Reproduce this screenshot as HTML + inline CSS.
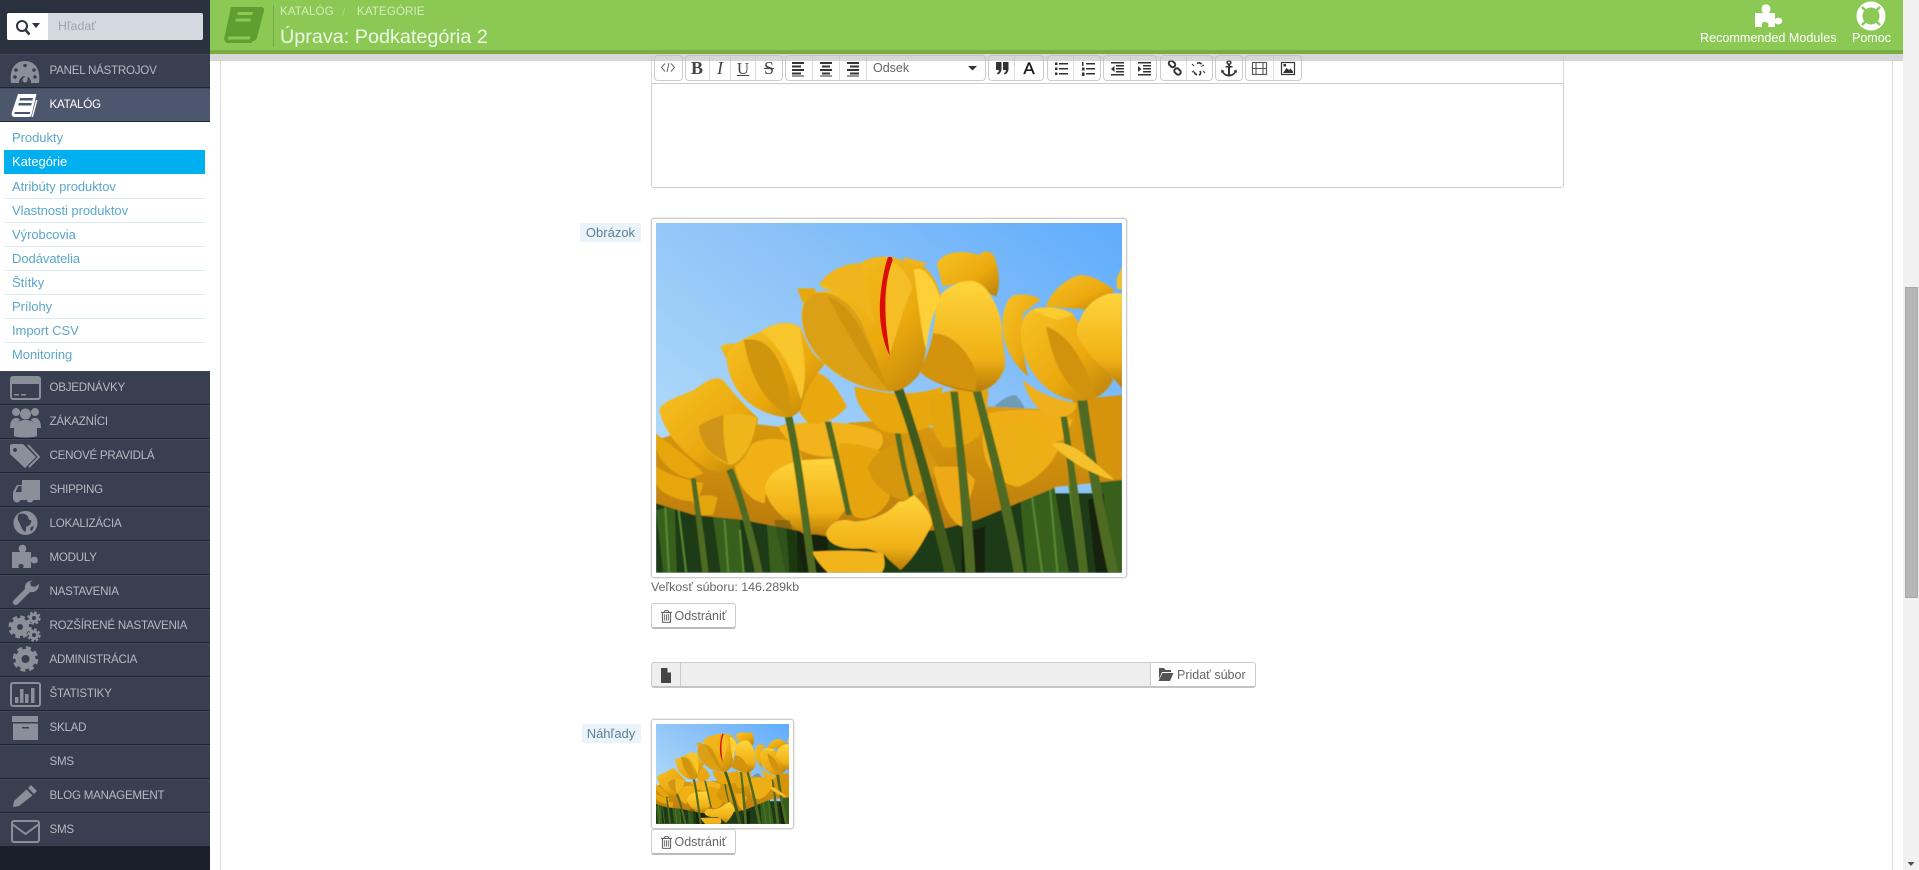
<!DOCTYPE html>
<html lang="sk"><head><meta charset="utf-8"><title>Úprava: Podkategória 2</title>
<style>
html,body{margin:0;padding:0;width:1919px;height:870px;overflow:hidden;background:#fff;font-family:"Liberation Sans",sans-serif}
div,span,a{position:absolute;white-space:nowrap;box-sizing:border-box}
svg{position:absolute;overflow:visible}
.m{left:0;width:210px;height:34px;background:#383f50;border-bottom:1px solid #1e2430;border-top:1px solid #434a5b}
.m span{left:49.5px;top:0;line-height:32px;font-size:11.6px;color:#b5b9c1;letter-spacing:-.25px}
.s{left:12px;font-size:13px;line-height:16px;color:#5aa7c9;letter-spacing:-.05px}
.l{left:4px;width:201px;height:1px;background:#dcebf2}
.g{top:55px;height:26px;border:1px solid #ccc;border-radius:4px;background:#fff}
.d{top:56px;width:1px;height:24px;background:#ddd}
.btn{left:651px;width:84.5px;height:26px;border:1px solid #ccc;border-bottom:2px solid #bbb;border-radius:3px;background:#fff}
.btn span{left:22.5px;top:0;line-height:24px;font-size:12.5px;color:#666}
.lab{background:#e9f3f9;border-radius:2px;color:#5d7f97;font-size:13px;line-height:19px;text-align:center}
.frame{border:1px solid #ccc;border-radius:3px;background:#fff;box-shadow:0 0 0 .5px #ddd}
</style></head><body>

<svg width="0" height="0" style="position:absolute">
<defs>
<linearGradient id="sky" x1="1" y1="0" x2="0" y2="1"><stop offset="0" stop-color="#5facfc"/><stop offset=".4" stop-color="#8cc2f8"/><stop offset=".75" stop-color="#aad6f8"/><stop offset="1" stop-color="#c4e6f6"/></linearGradient>
<linearGradient id="p1" x1="0" y1="0" x2="1" y2="1"><stop offset="0" stop-color="#f7c225"/><stop offset=".6" stop-color="#eba90f"/><stop offset="1" stop-color="#b97f0a"/></linearGradient>
<linearGradient id="p2" x1="0" y1="0" x2="0" y2="1"><stop offset="0" stop-color="#ffd53c"/><stop offset=".7" stop-color="#f0b015"/><stop offset="1" stop-color="#b67c08"/></linearGradient>
<linearGradient id="p3" x1="0" y1="0" x2="0" y2="1"><stop offset="0" stop-color="#e09f10"/><stop offset="1" stop-color="#b97a06"/></linearGradient>
<filter id="soft" x="-5%" y="-5%" width="110%" height="110%"><feGaussianBlur stdDeviation="1.6"/></filter>
<symbol id="tulips" viewBox="0 0 466 350" preserveAspectRatio="none">
<rect width="466" height="350" fill="url(#sky)"/>
<g transform="scale(.38270 .33333) translate(-251 -69)" filter="url(#soft)">
<path fill="#6f9bb5" d="M1130 625C1150 600 1175 585 1190 585C1205 600 1215 625 1220 640Z"/>
<!-- ground -->
<path fill="#1f3a12" d="M251 880H1469V1118H251Z"/>
<path fill="#37611f" d="M251 930L300 920L305 1118H270ZM400 950L470 960L480 1118H420ZM540 960H590L600 1118H550ZM1200 860L1290 850L1330 1118H1220ZM1400 840L1469 830V1118H1430Z"/>
<path fill="none" stroke="#5a8a30" stroke-width="5" d="M275 920L285 1118M310 930L330 1118M430 960L440 1118M470 990L480 1118M1230 860L1260 1118M1280 860L1300 1118M1330 850L1360 1118"/>
<path fill="#122409" d="M620 990H700V1118H620ZM1050 1000L1110 980V1118H1050ZM1380 900L1420 880L1440 1118H1400Z"/>
<!-- background yellow mass -->
<path fill="url(#p3)" d="M251 720L420 660L570 680C620 655 700 690 760 668L870 660L1000 690L1120 620L1300 630L1469 590V840L1300 860L1090 960L990 990L700 1010L480 960L350 945L251 910Z"/>
<path fill="#f2b31a" d="M570 680C640 660 780 660 840 700C860 760 800 770 720 770C640 775 600 740 570 680Z"/>
<path fill="#f0ae12" d="M1120 640C1200 620 1300 630 1340 660C1300 760 1280 820 1200 860C1130 850 1100 780 1105 700Z"/>
<path fill="#d69410" d="M1340 600L1469 585V840L1400 820L1290 730L1350 700Z"/>
<path fill="#e8a811" d="M770 560C820 570 900 600 1000 560L990 660C950 700 880 710 840 690C800 650 770 610 770 560Z"/>
<path fill="#e5a50f" d="M965 590L1040 565L1120 570L1110 680C1090 730 1040 750 1000 740C970 690 960 640 965 590Z"/>
<path fill="#e9a80f" d="M620 560C660 490 700 510 750 620C720 660 680 680 650 670C620 640 610 600 620 560Z"/>
<path fill="#e6a50e" d="M730 730C780 730 830 740 870 780L860 900C830 960 790 960 770 950C740 900 725 800 730 730Z"/>
<path fill="#f0b015" d="M455 780C500 720 540 700 620 730L640 800C590 780 540 830 535 910C490 900 460 850 455 780Z"/>
<path fill="url(#p2)" d="M535 860C550 810 590 790 640 780L720 775C740 800 750 860 745 930L700 1000L640 1005C590 960 540 920 535 860Z"/>
<path fill="#d4970f" d="M805 800C820 760 880 700 960 740L990 800C960 860 950 880 910 900C860 900 810 850 805 800Z"/>
<path fill="#edaa12" d="M975 800L1050 800L1085 840L1050 980C1010 960 990 880 975 800Z"/>
<path fill="#e8a610" d="M251 700C290 740 340 770 375 820L340 835C300 830 255 780 251 740ZM251 800C290 830 340 840 375 850L360 905C310 905 260 880 251 850Z"/>
<path fill="#e4a610" d="M345 900C360 885 400 880 412 895L400 945H360Z"/>
<path fill="#ecb012" d="M1105 690C1150 660 1230 670 1280 700C1290 770 1250 840 1190 860C1140 840 1105 770 1105 690Z"/>
<!-- stems -->
<g fill="#4f6a22">
<path d="M585 640L605 640C630 750 650 950 670 1118H650C630 950 610 750 585 640Z"/>
<path d="M692 665L708 665C725 740 745 850 762 945H748C730 850 710 750 692 665Z"/>
<path d="M432 805L452 805C480 880 510 1010 530 1118H510C490 1010 465 890 432 805Z"/>
<path d="M342 835L355 835C365 920 380 1020 388 1118H372C362 1020 352 920 342 835Z"/>
<path d="M875 700L890 700C900 770 910 830 925 890H912C898 830 885 770 875 700Z"/>
<path d="M1020 575L1040 575C1050 700 1080 950 1085 1118H1060C1050 950 1035 700 1020 575Z"/>
<path d="M1078 572L1100 572C1130 700 1190 950 1212 1118H1186C1160 950 1110 700 1078 572Z"/>
<path d="M1308 650L1325 650C1340 760 1365 950 1380 1118H1358C1340 950 1325 760 1308 650Z"/>
<path d="M1352 600L1378 600C1395 750 1430 980 1460 1118H1432C1405 980 1370 750 1352 600Z"/>
<path d="M868 560L895 560C940 700 1000 950 1035 1118H1005C970 950 920 700 868 560Z" fill="#3f5a1c"/>
</g>
<!-- back flowers -->
<path fill="url(#p1)" d="M985 190C1000 160 1040 145 1095 165C1110 150 1125 150 1135 170C1150 220 1150 260 1140 290L1060 245L1000 260Z"/>
<path fill="#e8a80f" d="M620 265L665 265L675 285L640 315C630 300 625 280 620 265Z"/>
<path fill="#f0b41a" d="M895 170L960 190L925 215Z"/>
<path fill="url(#p1)" d="M1160 410C1150 350 1165 290 1190 285C1220 280 1250 290 1255 300L1210 340C1205 400 1210 480 1225 530C1190 500 1165 450 1160 410Z"/>
<path fill="url(#p1)" d="M1270 320C1280 280 1320 235 1360 225C1400 225 1440 265 1450 270L1400 330Z"/>
<path fill="#efb01a" d="M1210 540C1260 590 1310 600 1350 610C1350 640 1320 655 1290 650C1250 640 1220 590 1210 540Z"/>
<path fill="url(#p1)" d="M420 440C440 425 470 430 480 445L440 480C430 470 425 455 420 440Z"/>
<!-- left mid flower -->
<path fill="url(#p1)" d="M590 652C500 640 440 570 435 470C437 440 470 420 525 395C560 365 610 360 630 385C645 430 660 470 693 490C665 530 640 570 630 625C620 645 605 652 590 652Z"/>
<path fill="#cf9510" d="M480 420C530 410 570 440 600 580L600 640C540 620 500 540 480 420Z"/>
<path fill="#f8c52c" d="M525 395C560 365 610 360 628 385C635 450 650 520 630 600C610 520 580 440 525 395Z"/>
<!-- left flower -->
<path fill="url(#p1)" d="M410 817C340 790 270 700 260 630C265 605 310 590 350 570C380 545 410 520 430 545C460 590 495 630 518 655C510 720 490 770 460 795C445 810 425 817 410 817Z"/>
<path fill="#efb61c" d="M362 680C400 640 470 630 515 655C505 720 490 770 450 795C410 790 370 740 362 680Z"/>
<path fill="#d09412" d="M362 680C385 660 410 650 428 645C425 700 430 750 440 790C400 770 370 740 362 680Z"/>
<!-- right second -->
<path fill="url(#p2)" d="M1085 576C1010 570 945 530 938 510C965 470 975 420 985 300C1005 260 1055 235 1085 245C1120 255 1150 330 1155 380C1155 440 1170 490 1160 510C1145 550 1120 572 1085 576Z"/>
<path fill="#d49310" d="M975 400C1020 400 1060 440 1090 520L1085 572C1030 565 965 540 940 510C960 470 970 430 975 400Z"/>
<!-- main flower -->
<path fill="url(#p1)" d="M860 574C760 565 670 500 640 400C628 360 625 310 655 285C680 270 700 270 725 278C690 265 675 260 680 250C700 215 740 190 785 190C800 175 840 165 870 172C900 180 920 195 950 200C975 220 995 270 995 300C975 340 965 370 960 410C955 480 945 525 925 540C905 565 885 574 860 574Z"/>
<path fill="#fdd037" d="M925 210C950 190 985 250 995 300C975 340 965 370 957 450C945 400 935 300 925 210Z"/>
<path fill="#f5be25" d="M860 180C895 200 915 230 920 265C900 320 885 380 860 470C850 420 850 300 860 180Z"/>
<path fill="#dca014" d="M655 285C700 260 770 300 800 400C825 470 840 530 860 572C770 565 670 500 640 400C630 360 628 310 655 285Z"/>
<path fill="#cf9410" d="M700 290C760 310 800 400 858 570C800 500 745 390 700 290Z"/>
<path fill="#f0b41b" d="M680 250C700 215 740 190 785 190C800 250 815 320 825 380C790 320 740 270 680 250Z"/>
<!-- right flower -->
<path fill="url(#p1)" d="M1360 602C1285 600 1225 530 1207 440C1200 390 1205 345 1235 328C1270 315 1320 325 1340 340C1370 400 1420 490 1445 540C1430 580 1395 602 1360 602Z"/>
<path fill="#fccb2e" d="M1235 328C1270 315 1320 325 1340 345L1300 360C1270 350 1250 340 1235 328Z"/>
<path fill="#d1930f" d="M1270 380C1330 400 1380 500 1400 595C1330 590 1290 500 1270 380Z"/>
<!-- far right -->
<path fill="url(#p2)" d="M1350 400C1355 340 1390 290 1440 280L1469 280V565C1420 500 1370 460 1350 400Z"/>
<path fill="#f4c02a" d="M1455 235L1469 200V270L1455 265Z"/>
<path fill="#f5c12a" d="M1285 730C1320 720 1360 750 1400 790L1450 840C1400 830 1320 780 1285 730Z"/>
<!-- front droop -->
<path fill="url(#p2)" d="M695 1000C705 970 730 950 770 965C820 960 860 940 885 905C910 905 915 890 925 885C950 910 975 950 972 975C950 1020 930 1070 890 1110C860 1080 840 1055 800 1045C750 1050 700 1040 695 1000Z"/>
<path fill="#f2b41a" d="M660 1055C720 1050 790 1050 845 1060C850 1090 850 1105 840 1118H700C680 1095 665 1075 660 1055Z"/>
<path fill="#233d10" d="M845 1060L890 1118H855Z"/>
<!-- thin stem overlays on lower flowers -->
<path fill="#1d3610" d="M560 960L600 960L640 1118H590Z" opacity=".3"/>
</g>
<g transform="scale(.38270 .33333) translate(-251 -69)">
<path fill="#d90f05" d="M857 172C864 168 871 172 869 182C850 240 848 300 852 370C855 410 860 440 862 468C845 430 830 360 838 280C842 240 848 200 857 172Z"/>
</g>
</symbol>
<symbol id="trash" viewBox="0 0 12 14"><path fill="#666" d="M4 0h4l1 2h3v1.200h-1V13a1 1 0 0 1-1 1H2a1 1 0 0 1-1-1V3.200H0V2h3zM4.700 1l-.4 1h3.400l-.4-1zM2.300 3.200V12.800h7.400V3.200zM3.500 4.500h1v7h-1zM5.500 4.500h1v7h-1zM7.500 4.500h1v7h-1z"/></symbol>
</defs>
</svg>

<!-- frame lines -->
<div style="left:220px;top:60px;width:1px;height:810px;background:#e0e0e0"></div>
<div style="left:1892px;top:60px;width:1px;height:810px;background:#e0e0e0"></div>

<!-- sidebar -->
<div style="left:0;top:0;width:210px;height:870px;background:#1a1e29"></div>
<div style="left:0;top:0;width:210px;height:54px;background:#2b323f"></div>
<div style="left:7px;top:13px;width:196px;height:27px;background:#d4d8df;border-radius:2px"></div>
<div style="left:7px;top:13px;width:41px;height:27px;background:#fff;border-radius:2px 0 0 2px"></div>
<svg style="left:0;top:0" width="60" height="50"><circle cx="22" cy="26" r="5" fill="none" stroke="#2d3340" stroke-width="2"/><path stroke="#2d3340" stroke-width="2.500" d="M25.500 30l4 4.500"/><path fill="#2d3340" d="M32 23h8l-4 5z"/></svg>
<span style="left:58px;top:13px;line-height:27px;font-size:12.400px;color:#a0a5ad">Hľadať</span>

<div class="m" style="top:54px"><span style="top:0">PANEL NÁSTROJOV</span></div>
<div class="m" style="top:88px;background:#4c566c"><span style="color:#fff">KATALÓG</span></div>
<div style="left:0;top:122px;width:210px;height:249px;background:#fff"></div>
<div style="left:4px;top:150px;width:201px;height:24px;background:#00aff0"></div>
<div class="s" style="top:130px">Produkty</div>
<div class="s" style="top:154px;color:#fff">Kategórie</div>
<div class="s" style="top:179px">Atribúty produktov</div>
<div class="l" style="top:198px"></div>
<div class="s" style="top:203px">Vlastnosti produktov</div>
<div class="l" style="top:222px"></div>
<div class="s" style="top:227px">Výrobcovia</div>
<div class="l" style="top:246px"></div>
<div class="s" style="top:251px">Dodávatelia</div>
<div class="l" style="top:270px"></div>
<div class="s" style="top:275px">Štítky</div>
<div class="l" style="top:294px"></div>
<div class="s" style="top:299px">Prílohy</div>
<div class="l" style="top:318px"></div>
<div class="s" style="top:323px">Import CSV</div>
<div class="l" style="top:342px"></div>
<div class="s" style="top:347px">Monitoring</div>

<div class="m" style="top:371px"><span>OBJEDNÁVKY</span></div>
<div class="m" style="top:405px"><span>ZÁKAZNÍCI</span></div>
<div class="m" style="top:439px"><span>CENOVÉ PRAVIDLÁ</span></div>
<div class="m" style="top:473px"><span>SHIPPING</span></div>
<div class="m" style="top:507px"><span>LOKALIZÁCIA</span></div>
<div class="m" style="top:541px"><span>MODULY</span></div>
<div class="m" style="top:575px"><span>NASTAVENIA</span></div>
<div class="m" style="top:609px"><span>ROZŠÍRENÉ NASTAVENIA</span></div>
<div class="m" style="top:643px"><span>ADMINISTRÁCIA</span></div>
<div class="m" style="top:677px"><span>ŠTATISTIKY</span></div>
<div class="m" style="top:711px"><span>SKLAD</span></div>
<div class="m" style="top:745px"><span>SMS</span></div>
<div class="m" style="top:779px"><span>BLOG MANAGEMENT</span></div>
<div class="m" style="top:813px"><span>SMS</span></div>

<!-- sidebar icons -->
<svg style="left:0;top:0" width="60" height="870" fill="#8b8f99">
<!-- gauge -->
<path d="M11 83C9 68 16 61 25 61C34 61 41 68 39 83H31A6 7 0 0 0 19 83Z"/>
<g fill="#383f50"><circle cx="25" cy="65.500" r="1.800"/><circle cx="16" cy="70" r="1.800"/><circle cx="34" cy="70" r="1.800"/><circle cx="15" cy="77" r="1.800"/><circle cx="35" cy="77" r="1.800"/></g>
<path fill="#8b8f99" d="M24 79l3-10 .8 10z"/><circle cx="25" cy="80" r="2.500"/>
<!-- book white -->
<path fill="#fff" fill-rule="evenodd" d="M18 94h18.500l-5 21c-.5 1.500-1.500 2-3 2H15c-3 0-4-2-3-5zM20 98l-.6 2.500h13l.6-2.500zM18.800 103l-.6 2.500h13l.6-2.500z"/>
<path fill="#4c566c" d="M14.700 112h15.600l-.5 2H14.400z"/>
<path fill="#fff" d="M36 100l1.500 0-4.500 17h-1.500z"/>
<!-- card -->
<g><rect x="11" y="377" width="29" height="22" rx="2" fill="none" stroke="#8b8f99" stroke-width="2"/><rect x="11" y="377" width="29" height="7"/><rect x="14" y="394" width="5" height="1.500"/><rect x="21" y="394" width="5" height="1.500"/></g>
<!-- people -->
<circle cx="16" cy="412" r="4"/><circle cx="35" cy="412" r="4"/><circle cx="25.500" cy="414" r="5.500"/>
<path d="M10 428c0-6 2-10 6-10 2 0 4 1 4 2-3 2-4 5-4 8zM41 428c0-6-2-10-6-10-2 0-4 1-4 2 3 2 4 5 4 8z"/>
<path d="M14 436v-6c0-6 4-10 11.500-10S37 424 37 430v6c-3 2-20 2-23 0z"/>
<!-- tags -->
<path d="M10 445l2-1h11l13 13-11 11-15-14zM15 448a2 2 0 1 0 .01 0z" fill-rule="evenodd"/>
<path fill="none" stroke="#8b8f99" stroke-width="2" d="M28 445l11 12-10 10"/>
<!-- truck -->
<path d="M22 480h18v20H33a4 4 0 0 0-7 0h-6a4 4 0 0 0-7 0v-8l4-7h5zM15.500 492l3-6h3v6z" fill-rule="evenodd"/>
<circle cx="17" cy="499" r="3.500"/><circle cx="30" cy="499" r="3.500"/>
<!-- globe -->
<path fill-rule="evenodd" d="M25.500 511a12 12 0 1 0 .01 0zM19 514c4-1 8 0 9 3s1 3 3 3c1 2-1 5-3 6l-2 1c0 2 0 4-1 5-3-2-4-6-5-8s-4-6-1-10zM31 527l3-1-2 5-2-1z"/>
<!-- puzzle -->
<path d="M12 552h8c-1-2-2-3-1-5 1-3 6-3 7 0 1 2 0 3-1 5h6v6c2-1 3-2 5-1s3 5 0 6-3 0-5-1v6h-8c1-2 1-4-2-4s-3 2-2 4h-7z"/>
<!-- wrench -->
<path d="M33 581c-5-1-9 3-8 8l-11 11c-2 2-1 5 2 5 1 0 2-1 3-2l11-11c5 1 9-2 9-8l-4 3-4-1-1-4z"/>
<!-- gears -->
<g fill="none" stroke="#8b8f99"><circle cx="20" cy="627" r="6" stroke-width="6"/><circle cx="20" cy="627" r="9.800" stroke-width="3.500" stroke-dasharray="4.500 3.200"/><circle cx="34" cy="618" r="3.500" stroke-width="3"/><circle cx="34" cy="618" r="5.600" stroke-width="2.200" stroke-dasharray="2.600 1.800"/><circle cx="34" cy="635" r="3.500" stroke-width="3"/><circle cx="34" cy="635" r="5.600" stroke-width="2.200" stroke-dasharray="2.600 1.800"/>
<!-- admin gear -->
<circle cx="25.500" cy="659" r="7" stroke-width="6"/><circle cx="25.500" cy="659" r="11" stroke-width="3.500" stroke-dasharray="5 3.640"/></g>
<!-- stats -->
<rect x="11" y="683" width="29" height="23" rx="2" fill="none" stroke="#8b8f99" stroke-width="2"/>
<rect x="15" y="697" width="3.500" height="6"/><rect x="20" y="689" width="3.500" height="14"/><rect x="25" y="694" width="3.500" height="9"/><rect x="31" y="688" width="3.500" height="15"/>
<!-- archive -->
<rect x="12" y="716" width="26" height="6"/>
<path fill-rule="evenodd" d="M13 723.500h25V740H13zM22 727v1.500h7V727z"/>
<!-- pencil -->
<path d="M31 785l6 6-3 3-6-6zM26.500 789.500l6 6L19 806l-6 1 1-6zM17 800l2 2-3 1z"/>
<!-- envelope -->
<rect x="12" y="821" width="27" height="21" rx="2" fill="none" stroke="#8b8f99" stroke-width="2"/>
<path fill="none" stroke="#8b8f99" stroke-width="2" d="M12 824l13.500 10L39 824"/>
</svg>

<!-- editor -->
<div style="left:651px;top:83px;width:913px;height:105px;border:1px solid #ccc;border-radius:0 0 3px 3px;background:#fff"></div>
<div style="left:651px;top:55px;width:913px;height:29px;border-left:1px solid #ddd;border-right:1px solid #ddd;border-bottom:1px solid #ccc"></div>
<div class="g" style="left:654px;width:29px"></div>
<div class="g" style="left:685px;width:98px"></div>
<div class="g" style="left:785px;width:201px"></div>
<div class="g" style="left:988px;width:56px"></div>
<div class="g" style="left:1047px;width:54px"></div>
<div class="g" style="left:1103px;width:54px"></div>
<div class="g" style="left:1160px;width:53px"></div>
<div class="g" style="left:1215px;width:28px"></div>
<div class="g" style="left:1245px;width:57px"></div>
<div class="d" style="left:709px"></div><div class="d" style="left:730px"></div><div class="d" style="left:755px"></div>
<div class="d" style="left:812px"></div><div class="d" style="left:839px"></div><div class="d" style="left:866px"></div>
<div class="d" style="left:1014px"></div><div class="d" style="left:1073px"></div><div class="d" style="left:1130px"></div>
<div class="d" style="left:1186px"></div><div class="d" style="left:1273px"></div>

<span style="left:690px;top:58px;width:14px;text-align:center;font:bold 18px/21px 'Liberation Serif',serif;color:#444">B</span>
<span style="left:713px;top:58px;width:14px;text-align:center;font:italic 18px/21px 'Liberation Serif',serif;color:#444">I</span>
<span style="left:736px;top:58px;width:14px;text-align:center;font:17px/21px 'Liberation Serif',serif;color:#444;text-decoration:underline">U</span>
<span style="left:762px;top:58px;width:14px;text-align:center;font:18px/21px 'Liberation Serif',serif;color:#444;text-decoration:line-through">S</span>
<span style="left:873px;top:56px;font-size:12.500px;line-height:24px;color:#666">Odsek</span>
<span style="left:1022px;top:58px;width:14px;text-align:center;font:17px/21px 'Liberation Sans',sans-serif;color:#111;-webkit-text-stroke:.3px #111">A</span>

<svg style="left:0;top:0" width="1400" height="100" fill="#333">
<path fill="none" stroke="#666" stroke-width="1" d="M665 63.500l-3.500 4 3.500 4M667 72l2-9M671 63.500l3.500 4-3.500 4"/>
<path d="M792 62h12v2h-12zM792 65.500h9v2h-9zM792 69h12v2h-12zM792 72.500h9v2h-9z"/><path d="M792 75.500h12v1h-12z"/>
<path d="M820 62h12v2h-12zM822 65.500h8v2h-8zM820 69h12v2h-12zM822 72.500h8v2h-8z"/><path d="M820 75.500h12v1h-12z"/>
<path d="M847 62h12v2h-12zM850 65.500h9v2h-9zM847 69h12v2h-12zM850 72.500h9v2h-9z"/><path d="M847 75.500h12v1h-12z"/>
<path d="M968 66h9l-4.500 4.500z"/>
<path d="M996 62h5.500v7c0 3-2 5-4 5.500l-.5-1.500c1.200-.5 2-1.500 2-3h-3zM1003 62h5.500v7c0 3-2 5-4 5.500l-.5-1.500c1.200-.5 2-1.500 2-3h-3z"/>
<path d="M1055 62.500h2.500v2.500h-2.500zM1059 63h9v1.500h-9zM1055 67.500h2.500v2.500h-2.500zM1059 68h9v1.500h-9zM1055 72.500h2.500v2.500h-2.500zM1059 73h9v1.500h-9z"/>
<path d="M1082 62h1.500v4h-1.500zM1082 67.500h2.500v3h-2.500zM1082 72.500h2.500v3.500h-2.500zM1086 63h9v1.500h-9zM1086 68h9v1.500h-9zM1086 73h9v1.500h-9z"/>
<path d="M1111 62h13v1.500h-13zM1116 65h8v1.500h-8zM1116 68h8v1.500h-8zM1116 71h8v1.500h-8zM1111 74h13v1.500h-13zM1114.500 66v6l-3.500-3z"/>
<path d="M1138 62h13v1.500h-13zM1143 65h8v1.500h-8zM1143 68h8v1.500h-8zM1143 71h8v1.500h-8zM1138 74h13v1.500h-13zM1138 66v6l3.500-3z"/>
<g fill="none" stroke="#333" stroke-width="2"><rect x="1168.500" y="61.500" width="7" height="5" rx="2.500" transform="rotate(45 1172 64)"/><rect x="1174" y="69" width="7" height="5" rx="2.500" transform="rotate(45 1177.500 71.500)"/>
<path stroke-width="1.600" stroke-dasharray="5 2" d="M1197 63.500c3-2 6 1 4 3M1200 71c2 3-1 5-3 4s-3-3-3-3"/></g>
<path stroke="#333" stroke-width="1" d="M1192 64l2 2M1205 73l-2-2M1204 65l-2 1M1194 71l-2 1"/>
<path fill-rule="evenodd" d="M1229 60a2.500 2.500 0 0 1 1 4.800v1.200h2.500v1.500H1230v7c2-.2 3.500-1.200 4.500-2.800l-1-.7 3-1.500.5 3.500-1-.7c-1.500 2.700-4 4.200-7 4.200s-5.500-1.500-7-4.200l-1 .7.500-3.500 3 1.500-1 .7c1 1.600 2.500 2.600 4.500 2.800v-7h-2.500V66h2.500v-1.200a2.500 2.500 0 0 1 1-4.800zm0 1.500a1 1 0 1 0 .01 0z"/>
<g fill="none" stroke="#555" stroke-width="1.100"><rect x="1252.500" y="62.500" width="14" height="12"/><path d="M1256 62.500v12M1263 62.500v12M1252.500 68.500h3.500M1263 68.500h3.500M1256 68.500h7"/></g>
<rect x="1281.500" y="62.500" width="13" height="12" fill="none" stroke="#333" stroke-width="1.200"/>
<path d="M1283 73l3.500-5 2.500 2 1.500-1.500 2.500 3v1.500zM1283.500 64h2.500v2.500h-2.500z"/>
</svg>

<!-- image block -->
<div class="lab" style="left:580px;top:223px;width:61px">Obrázok</div>
<div class="frame" style="left:651px;top:218px;width:476px;height:360px"></div>
<svg style="left:656px;top:223px" width="466" height="350"><use href="#tulips" width="466" height="350"/></svg>
<span style="left:651px;top:579px;font-size:12.400px;line-height:16px;color:#666">Veľkosť súboru: 146.289kb</span>
<div class="btn" style="top:603px"><svg style="left:8.500px;top:6px" width="11" height="13"><use href="#trash" width="11" height="13"/></svg><span>Odstrániť</span></div>

<div style="left:651px;top:662px;width:605px;height:26px;background:#eee;border:1px solid #ccc;border-bottom:2px solid #c4c4c4;border-radius:3px"></div>
<div style="left:680px;top:663px;width:1px;height:24px;background:#ccc"></div>
<div style="left:1150px;top:662px;width:106px;height:26px;background:#fff;border:1px solid #ccc;border-bottom:2px solid #c4c4c4;border-radius:0 3px 3px 0"></div>
<svg style="left:0;top:0" width="1300" height="700" fill="#444">
<path d="M661 668h6l4 4.500V683h-10zM667.500 668.500v4h3.500z" fill-rule="evenodd"/>
<path fill="#555" d="M1159 668h5l1.500 2h5.500v2h-9l-3 7zM1162.500 673h11l-3.500 8h-11.500z"/>
</svg>
<span style="left:1177px;top:662px;font-size:12.500px;line-height:26px;color:#666">Pridať súbor</span>

<div class="lab" style="left:581.500px;top:724px;width:59px">Náhľady</div>
<div class="frame" style="left:651px;top:719px;width:143px;height:110px"></div>
<svg style="left:656px;top:724px" width="133" height="100"><use href="#tulips" width="133" height="100"/></svg>
<div class="btn" style="top:829px"><svg style="left:8.500px;top:6px" width="11" height="13"><use href="#trash" width="11" height="13"/></svg><span>Odstrániť</span></div>

<!-- header -->
<div style="left:210px;top:54px;width:1693px;height:7px;background:rgba(190,190,190,.62)"></div>
<div style="left:210px;top:0;width:1693px;height:50px;background:#8bc954"></div>
<div style="left:210px;top:50px;width:1693px;height:4px;background:#78ad42"></div>
<svg style="left:0;top:0" width="1919" height="54">
<path fill="#5f9f32" d="M231 7h30c2.500 0 3.500 1.500 3 3.500l-7 27c-.7 2.500-2.500 3.500-4.500 3.500l-.5 2H229c-4 0-5.500-2.500-4.500-6z"/>
<path fill="#8bc954" d="M238 12h15l-.8 3h-15zM236 18.500h15l-.8 3h-15zM228.500 36.500h22l-.8 3h-22z"/>
<rect x="273" y="5" width="1" height="42" fill="#73aa44"/>
<!-- puzzle -->
<path fill="#fff" d="M1755 13h8c-1-2-2-3-1-6 1-3.500 7-3.500 8 0 1 3 0 4-1 6h6v6c2-1 3-2 5-1 3 1 3 5 0 6s-3 0-5-1v4h-7c1-2 1-5-3-5s-3 3-3 5h-7z"/>
<!-- lifebuoy -->
<g fill="none" stroke="#fff"><circle cx="1871" cy="16" r="11.500" stroke-width="6"/><circle cx="1871" cy="16" r="7" stroke="#8bc954" stroke-width="1.500"/></g>
<g stroke="#8bc954" stroke-width="2.500"><path d="M1862 7l5 5M1880 7l-5 5M1862 25l5-5M1880 25l-5-5"/></g>
</svg>
<span style="left:280px;top:4px;font-size:11.600px;line-height:16px;color:#d4ecbe;letter-spacing:.1px">KATALÓG</span>
<span style="left:342px;top:4px;font-size:12px;line-height:16px;color:#aad581">/</span>
<span style="left:357px;top:4px;font-size:11.600px;line-height:16px;color:#d4ecbe;letter-spacing:.1px">KATEGÓRIE</span>
<span style="left:280px;top:24px;font-size:19.800px;line-height:26px;color:#eef8e6">Úprava: Podkategória 2</span>
<span style="left:1700px;top:30px;font-size:12.600px;line-height:16px;color:#fff">Recommended Modules</span>
<span style="left:1852px;top:30px;font-size:12.500px;line-height:16px;color:#fff">Pomoc</span>

<!-- scrollbar -->
<div style="left:1903px;top:0;width:16px;height:870px;background:#f1f1f1"></div>
<div style="left:1905px;top:287px;width:13px;height:311px;background:#b6b6b6;border:1px solid #a9a9a9"></div>
<svg style="left:1903px;top:855px" width="16" height="15"><path fill="#505050" d="M4.500 7h7l-3.500 4z"/></svg>
</body></html>
